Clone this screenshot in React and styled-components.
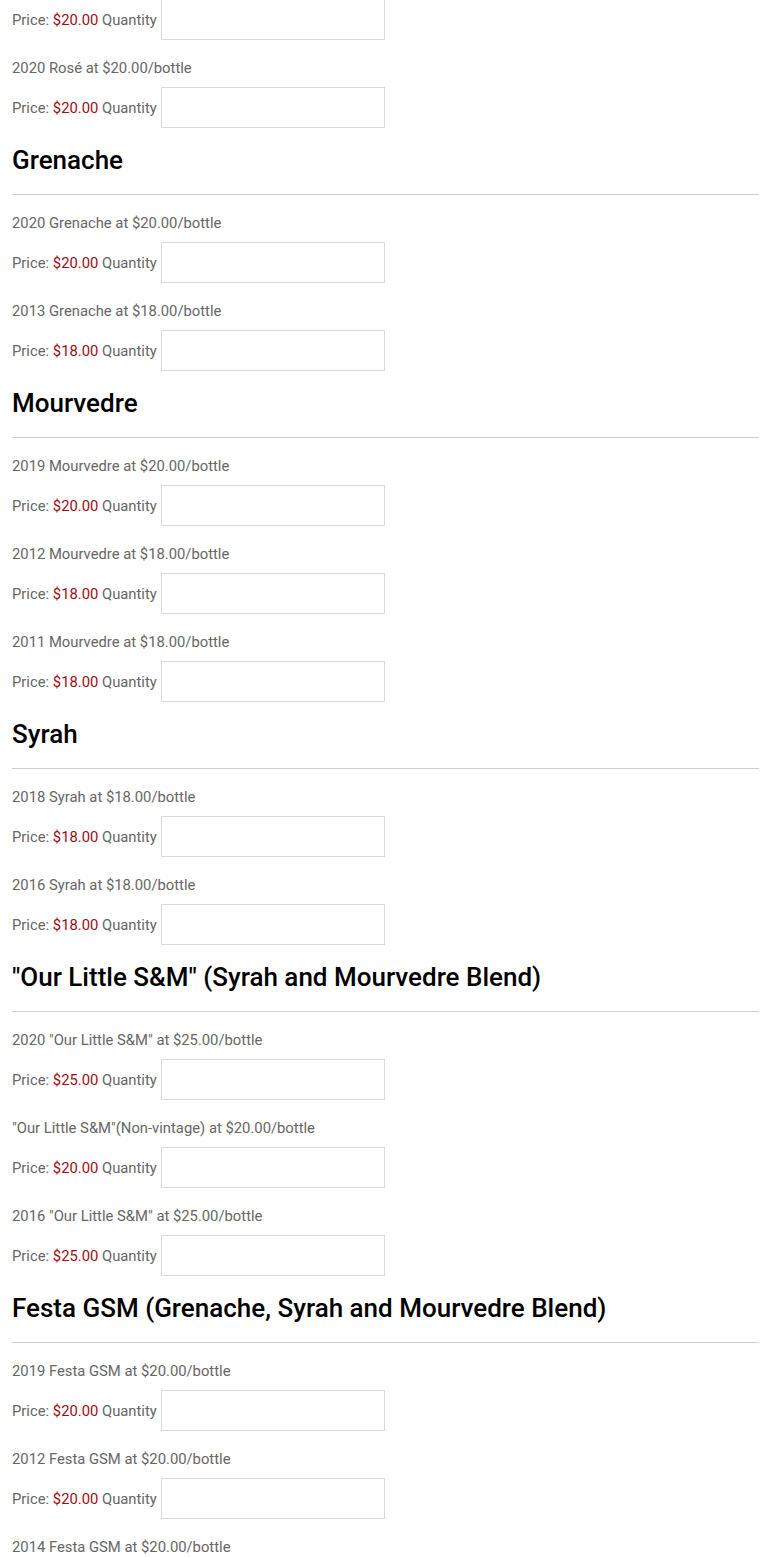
import React from 'react';
import styled, { createGlobalStyle } from 'styled-components';

const GlobalStyle = createGlobalStyle`
    html, body {
        margin: 0;
        padding: 0;
        background: #fff;
    }
    body {
        font-family: Roboto, "Liberation Sans", Arial, sans-serif;
        overflow: hidden;
    }
`;

const groups = [
    {
        title: null,
        items: [
            { name: null, price: '20.00' },
            { name: '2020 Rosé', price: '20.00' },
        ],
    },
    {
        title: 'Grenache',
        items: [
            { name: '2020 Grenache', price: '20.00' },
            { name: '2013 Grenache', price: '18.00' },
        ],
    },
    {
        title: 'Mourvedre',
        items: [
            { name: '2019 Mourvedre', price: '20.00' },
            { name: '2012 Mourvedre', price: '18.00' },
            { name: '2011 Mourvedre', price: '18.00' },
        ],
    },
    {
        title: 'Syrah',
        items: [
            { name: '2018 Syrah', price: '18.00' },
            { name: '2016 Syrah', price: '18.00' },
        ],
    },
    {
        title: '"Our Little S&M" (Syrah and Mourvedre Blend)',
        items: [
            { name: '2020 "Our Little S&M"', price: '25.00' },
            { name: '"Our Little S&M"(Non-vintage)', price: '20.00' },
            { name: '2016 "Our Little S&M"', price: '25.00' },
        ],
    },
    {
        title: 'Festa GSM (Grenache, Syrah and Mourvedre Blend)',
        items: [
            { name: '2019 Festa GSM', price: '20.00' },
            { name: '2012 Festa GSM', price: '20.00' },
            { name: '2014 Festa GSM', price: '20.00' },
        ],
    },
];

function App() {
    return (
        <React.Fragment>
            <GlobalStyle />
            <Page>
                {groups.map((group, gi) => (
                    <Group key={gi}>
                        {group.title && (
                            <React.Fragment>
                                <Heading>{group.title}</Heading>
                                <Rule />
                            </React.Fragment>
                        )}
                        {group.items.map((item, ii) => (
                            <Item key={ii}>
                                {item.name && (
                                    <Name>{item.name} at ${item.price}/bottle</Name>
                                )}
                                <PriceRow>
                                    Price: <Amount>${item.price}</Amount> Quantity{' '}
                                    <QtyInput type="text" />
                                </PriceRow>
                            </Item>
                        ))}
                    </Group>
                ))}
            </Page>
        </React.Fragment>
    );
}

export default App;

const Page = styled.div`
    padding: 0 11px 0 12px;
    margin-top: -1px;
`;

const Group = styled.section`
    display: flex;
    flex-direction: column;
`;

const Heading = styled.h2`
    margin: 17px 0 0;
    font-size: 26px;
    font-weight: 500;
    line-height: 30px;
    color: #000;
`;

const Rule = styled.hr`
    margin: 19px 0 0;
    border: 0;
    border-top: 1px solid #cfcfcf;
    height: 0;
`;

const Item = styled.div`
    display: flex;
    flex-direction: column;
`;

const Name = styled.p`
    margin: 18px 0 9px;
    font-size: 14.8px;
    line-height: 20px;
    color: #666;
`;

const PriceRow = styled.div`
    display: flex;
    align-items: center;
    white-space: pre;
    font-size: 14.8px;
    color: #666;
`;

const Amount = styled.span`
    color: #a10a14;
`;

const QtyInput = styled.input`
    box-sizing: border-box;
    width: 224px;
    height: 41px;
    margin: 0 0 0 1px;
    padding: 0 8px;
    border: 1px solid #dadada;
    background: #fff;
    font-size: 15px;
    outline: none;
`;
